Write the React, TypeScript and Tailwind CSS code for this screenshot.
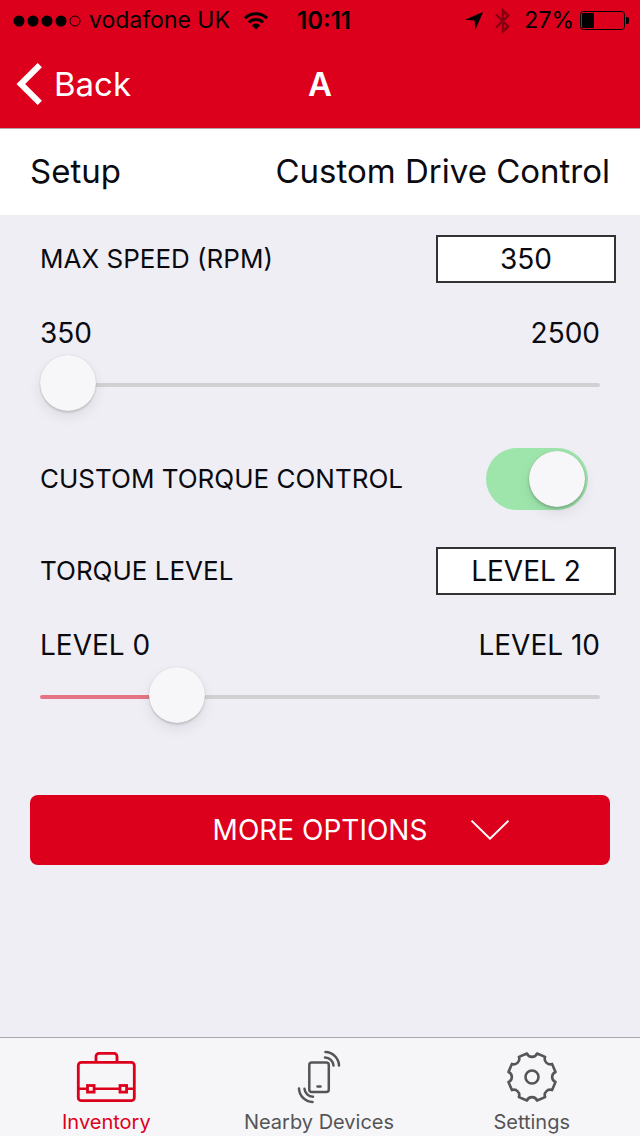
import { useState } from "react";
import type { CSSProperties, ReactNode } from "react";

// Black glyphs of the phone status bar
function StatusBar() {
  return (
    <div className="grid h-10 grid-cols-[1fr_auto_1fr] items-center pl-[13px] pr-[11px] pt-px text-[23px] text-black">
      <div className="flex items-center">
        <svg width="68" height="12" viewBox="0 0 68 12" aria-hidden="true">
          <circle cx="6" cy="6" r="5.5" />
          <circle cx="20" cy="6" r="5.5" />
          <circle cx="34" cy="6" r="5.5" />
          <circle cx="48" cy="6" r="5.5" />
          <circle cx="62" cy="6" r="5" fill="none" stroke="currentColor" />
        </svg>
        <span className="ml-2 mr-3.5 whitespace-nowrap">vodafone UK</span>
        <svg width="24" height="18" viewBox="0 0 24 18" fill="none" stroke="currentColor" strokeWidth="3" aria-hidden="true">
          <path d="M1 6.2a15.8 15.8 0 0 1 22 0" />
          <path d="M5 10.4a10 10 0 0 1 14 0" />
          <path d="M12 17.6 7.8 13.3a6 6 0 0 1 8.4 0z" fill="currentColor" stroke="none" />
        </svg>
      </div>
      <span className="pl-1.5 text-2xl font-semibold">10:11</span>
      <div className="flex items-center justify-end">
        <svg width="18" height="18" viewBox="0 0 18 18" aria-hidden="true">
          <path d="M18 0 10.3 18 9.6 8.4 0 7.7z" />
        </svg>
        <svg width="15" height="26" viewBox="0 0 15 26" className="ml-3 text-[#860010]" fill="none" stroke="currentColor" strokeWidth="2.4" aria-hidden="true">
          <path d="M1 6.5 13.2 18.4 8 23.4V2.600l5.200 5L1 19.500" />
        </svg>
        <span className="ml-3.5 mr-1.5">27%</span>
        <svg width="49" height="19" viewBox="0 0 49 19" aria-hidden="true">
          <rect x="0.5" y="0.5" width="44" height="18" rx="3" fill="none" stroke="currentColor" />
          <rect x="2" y="2" width="12" height="15" rx="1" />
          <path d="M46 6h1a2 2 0 0 1 2 2v3a2 2 0 0 1-2 2h-1z" />
        </svg>
      </div>
    </div>
  );
}

function NavBar() {
  return (
    <div className="grid h-[88px] grid-cols-[1fr_auto_1fr] items-center px-4 text-white">
      <button type="button" className="flex items-center gap-3 justify-self-start text-[33px] leading-10">
        <svg width="26" height="42" viewBox="0 0 26 42" fill="none" stroke="currentColor" strokeWidth="6" aria-hidden="true">
          <path d="M23.8 2.1 4.8 21l19 18.900" />
        </svg>
        Back
      </button>
      <h1 className="text-[33px] font-semibold leading-10">A</h1>
    </div>
  );
}

type FieldProps = {
  id: string;
  label: string;
  value: string;
};

function ValueField({ id, label, value }: FieldProps) {
  return (
    <div className="flex items-center justify-between pl-10 pr-6">
      <label htmlFor={id} className="text-[26px] leading-8">{label}</label>
      <input
        id={id}
        type="text"
        readOnly
        value={value}
        className="h-12 w-[180px] border-2 border-[#333333] bg-white text-center text-[28px] outline-none"
      />
    </div>
  );
}

type SliderProps = {
  label: string;
  min: number;
  max: number;
  value: number;
  minLabel: string;
  maxLabel: string;
  onChange: (value: number) => void;
};

function RangeSlider({ label, min, max, value, minLabel, maxLabel, onChange }: SliderProps) {
  const percent = ((value - min) / (max - min)) * 100;

  return (
    <div className="mt-8 px-10">
      <div className="flex justify-between text-[28px] leading-9">
        <span>{minLabel}</span>
        <span>{maxLabel}</span>
      </div>
      <input
        type="range"
        aria-label={label}
        min={min}
        max={max}
        step="any"
        value={value}
        onChange={(e) => onChange(Number(e.target.value))}
        style={{ "--fill": `${percent}%` } as CSSProperties}
        className="mt-1 block h-[60px] w-full appearance-none bg-transparent outline-none [&::-webkit-slider-runnable-track]:h-1 [&::-webkit-slider-runnable-track]:rounded-full [&::-webkit-slider-runnable-track]:bg-[linear-gradient(to_right,#e57485_var(--fill),#d1d1d3_var(--fill))] [&::-webkit-slider-thumb]:-mt-7 [&::-webkit-slider-thumb]:size-14 [&::-webkit-slider-thumb]:appearance-none [&::-webkit-slider-thumb]:rounded-full [&::-webkit-slider-thumb]:bg-[#f7f7f9] [&::-webkit-slider-thumb]:shadow-[0_0_1px_rgba(0,0,0,0.2),0_2px_2px_rgba(0,0,0,0.12),0_6px_14px_rgba(0,0,0,0.08)]"
      />
    </div>
  );
}

function ToolboxIcon() {
  return (
    <svg width="60" height="52" viewBox="0 0 60 52" fill="none" stroke="currentColor" strokeWidth="2.8" aria-hidden="true">
      <rect x="2.3" y="11.3" width="56" height="38.4" rx="3" />
      <path d="M20 11V5.3a3 3 0 0 1 3-3h15a3 3 0 0 1 3 3V11" />
      <path d="M2.3 37.8h9M18.500 37.8h25.5M51 37.8h7" strokeWidth="2.4" />
      <rect x="11.5" y="34.5" width="6.6" height="6.6" />
      <rect x="44" y="34.5" width="6.6" height="6.6" />
    </svg>
  );
}

function DeviceIcon() {
  return (
    <svg width="44" height="54" viewBox="0 0 44 54" fill="none" stroke="currentColor" strokeWidth="2.5" strokeLinecap="round" aria-hidden="true">
      <rect x="12.3" y="12.5" width="19.5" height="29.500" rx="2.5" />
      <path d="M20.5 36.5h3" />
      <path d="M28 7.500a8.500 8.500 0 0 1 8.500 8M28.500 2A14 14 0 0 1 42 15.500" />
      <path d="M16 46.700a8.500 8.500 0 0 1-8.500-8M15.500 52A14 14 0 0 1 2 38.500" />
    </svg>
  );
}

function GearIcon() {
  return (
    <svg width="52" height="52" viewBox="0 0 52 52" fill="none" stroke="currentColor" strokeWidth="2.6" strokeLinejoin="round" aria-hidden="true">
      <path d="M31 2.5 39.1 5.9A5.4 5.4 0 0 0 46.1 12.9L49.5 21A5.4 5.4 0 0 0 49.5 31L46.1 39.1A5.4 5.4 0 0 0 39.1 46.1L31 49.5A5.4 5.4 0 0 0 21 49.5L12.9 46.1A5.4 5.4 0 0 0 5.9 39.1L2.5 31A5.4 5.4 0 0 0 2.5 21L5.9 12.9A5.4 5.4 0 0 0 12.9 5.9L21 2.5A5.4 5.4 0 0 0 31 2.5Z" />
      <circle cx="26" cy="26" r="6.5" />
    </svg>
  );
}

type TabProps = {
  label: string;
  icon: ReactNode;
  active?: boolean;
};

function Tab({ label, icon, active }: TabProps) {
  return (
    <a
      href="#"
      aria-current={active ? "page" : undefined}
      className={`flex flex-1 flex-col items-center text-xl leading-7 ${active ? "text-[#dc001d]" : "text-[#555557]"}`}
    >
      <span className="flex h-[70px] items-center pt-2">{icon}</span>
      {label}
    </a>
  );
}

export default function App() {
  const [speed, setSpeed] = useState(350);
  const [torque, setTorque] = useState(2.17);
  const [torqueControl, setTorqueControl] = useState(true);

  return (
    <div className="flex min-h-screen flex-col bg-[#efeef5] font-['Inter','Liberation_Sans',sans-serif] text-[#0a0a10]">
      <header className="border-b border-[#b5a5aa] bg-[#dc001d]">
        <StatusBar />
        <NavBar />
      </header>

      <div className="flex h-[86px] items-center justify-between bg-white px-[30px] pb-0.5 text-[33px] leading-10">
        <h2>Setup</h2>
        <span>Custom Drive Control</span>
      </div>

      <main className="flex-1 pt-5">
        <ValueField id="max-speed" label="MAX SPEED (RPM)" value={String(Math.round(speed))} />
        <RangeSlider
          label="Max speed"
          min={350}
          max={2500}
          value={speed}
          minLabel="350"
          maxLabel="2500"
          onChange={setSpeed}
        />

        <div className="mt-[33px] flex items-center justify-between pl-10 pr-[52px]">
          <label htmlFor="torque-control" className="text-[26px] leading-8">CUSTOM TORQUE CONTROL</label>
          <input
            id="torque-control"
            type="checkbox"
            role="switch"
            checked={torqueControl}
            onChange={(e) => setTorqueControl(e.target.checked)}
            className="flex h-[62px] w-[102px] appearance-none items-center rounded-full bg-[#d1d1d3] px-[3px] before:size-14 before:rounded-full before:bg-[#f7f7f9] before:shadow-[0_0_1px_rgba(0,0,0,0.2),0_2px_3px_rgba(0,0,0,0.2),0_6px_14px_rgba(0,0,0,0.08)] before:content-[''] checked:justify-end checked:bg-[#9ee5ac]"
          />
        </div>

        <div className="mt-[37px]">
          <ValueField id="torque-level" label="TORQUE LEVEL" value={`LEVEL ${Math.round(torque)}`} />
          <RangeSlider
            label="Torque level"
            min={0}
            max={10}
            value={torque}
            minLabel="LEVEL 0"
            maxLabel="LEVEL 10"
            onChange={setTorque}
          />
        </div>

        <div className="mt-[68px] px-[30px]">
          <button
            type="button"
            className="grid h-[70px] w-full grid-cols-[1fr_auto_1fr] items-center rounded-lg bg-[#dc001d] text-[28px] text-white"
          >
            <span className="col-start-2">MORE OPTIONS</span>
            <svg width="38" height="20" viewBox="0 0 38 20" className="ml-11" fill="none" stroke="currentColor" strokeWidth="2" aria-hidden="true">
              <path d="M0.5 0.7 19 18.7 37.5 0.7" />
            </svg>
          </button>
        </div>
      </main>

      <nav className="flex border-t border-[#a9a8ae] bg-[#f6f6f8] pr-0.5">
        <Tab label="Inventory" icon={<ToolboxIcon />} active />
        <Tab label="Nearby Devices" icon={<DeviceIcon />} />
        <Tab label="Settings" icon={<GearIcon />} />
      </nav>
    </div>
  );
}
